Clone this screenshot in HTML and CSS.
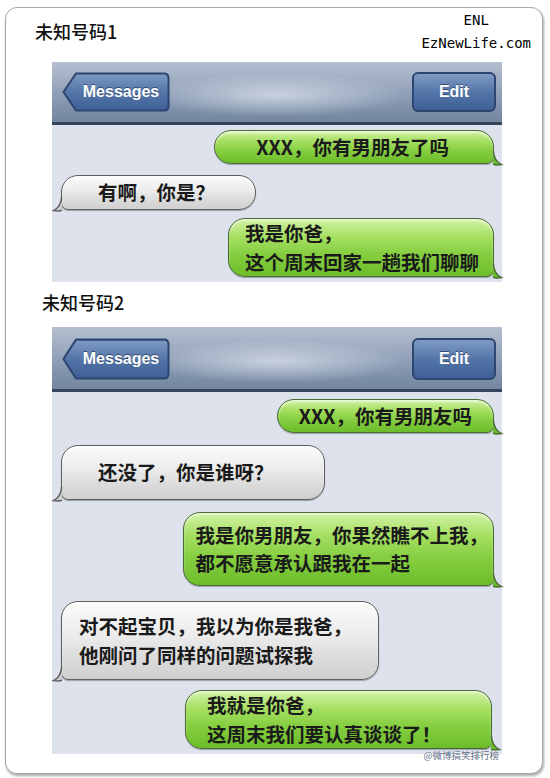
FILE: index.html
```html
<!DOCTYPE html>
<html lang="zh">
<head>
<meta charset="utf-8">
<title>未知号码</title>
<link rel="stylesheet" href="styles.css">
</head>
<body>
<div class="card">
  <header class="head head1">
    <h2 class="title">未知号码1</h2>
    <div class="logo"><div>ENL</div><div>EzNewLife.com</div></div>
  </header>
  <section class="screen">
    <div class="nav">
      <div class="btn back">
        <svg class="back-shape" viewBox="0 0 108 40" preserveAspectRatio="none">
          <defs>
            <linearGradient id="bg1" x1="0" y1="0" x2="0" y2="1">
              <stop offset="0" stop-color="#7f9bc4"/>
              <stop offset="0.5" stop-color="#5475a8"/>
              <stop offset="1" stop-color="#3f6096"/>
            </linearGradient>
          </defs>
          <path d="M14 1.5 H102 Q106.5 1.5 106.5 6 V34 Q106.5 38.5 102 38.5 H14 L1.5 20 Z" fill="url(#bg1)" stroke="#2c4670" stroke-width="2"/>
        </svg>
        <span class="btn-text">Messages</span>
      </div>
      <div class="btn edit"><span class="btn-text">Edit</span></div>
    </div>
    <div class="chat chat1">
      <div class="msg out a1">XXX，你有男朋友了吗<svg class="tail" viewBox="0 0 9 14"><path class="tf" d="M0 0 C0.5 7 3 11 8.5 13.6 C5 14.2 2 14 0 13.3 Z"/><path class="ts" d="M0.3 0 C0.8 7 3.2 11 8.5 13.6 C5 14.2 2 14 0 13.3"/></svg></div>
      <div class="msg in a2">有啊，你是？<svg class="tail" viewBox="0 0 9 14"><path class="tf" d="M0 0 C0.5 7 3 11 8.5 13.6 C5 14.2 2 14 0 13.3 Z"/><path class="ts" d="M0.3 0 C0.8 7 3.2 11 8.5 13.6 C5 14.2 2 14 0 13.3"/></svg></div>
      <div class="msg out a3">我是你爸，<br>这个周末回家一趟我们聊聊<svg class="tail" viewBox="0 0 9 14"><path class="tf" d="M0 0 C0.5 7 3 11 8.5 13.6 C5 14.2 2 14 0 13.3 Z"/><path class="ts" d="M0.3 0 C0.8 7 3.2 11 8.5 13.6 C5 14.2 2 14 0 13.3"/></svg></div>
    </div>
  </section>

  <header class="head head2">
    <h2 class="title">未知号码2</h2>
  </header>
  <section class="screen screen2">
    <div class="nav nav2">
      <div class="btn back">
        <svg class="back-shape" viewBox="0 0 108 40" preserveAspectRatio="none">
          <defs>
            <linearGradient id="bg2" x1="0" y1="0" x2="0" y2="1">
              <stop offset="0" stop-color="#7f9bc4"/>
              <stop offset="0.5" stop-color="#5475a8"/>
              <stop offset="1" stop-color="#3f6096"/>
            </linearGradient>
          </defs>
          <path d="M14 1.5 H102 Q106.5 1.5 106.5 6 V34 Q106.5 38.5 102 38.5 H14 L1.5 20 Z" fill="url(#bg2)" stroke="#2c4670" stroke-width="2"/>
        </svg>
        <span class="btn-text">Messages</span>
      </div>
      <div class="btn edit"><span class="btn-text">Edit</span></div>
    </div>
    <div class="chat chat2">
      <div class="msg out b1">XXX，你有男朋友吗<svg class="tail" viewBox="0 0 9 14"><path class="tf" d="M0 0 C0.5 7 3 11 8.5 13.6 C5 14.2 2 14 0 13.3 Z"/><path class="ts" d="M0.3 0 C0.8 7 3.2 11 8.5 13.6 C5 14.2 2 14 0 13.3"/></svg></div>
      <div class="msg in b2">还没了，你是谁呀？<svg class="tail" viewBox="0 0 9 14"><path class="tf" d="M0 0 C0.5 7 3 11 8.5 13.6 C5 14.2 2 14 0 13.3 Z"/><path class="ts" d="M0.3 0 C0.8 7 3.2 11 8.5 13.6 C5 14.2 2 14 0 13.3"/></svg></div>
      <div class="msg out b3">我是你男朋友，你果然瞧不上我，<br>都不愿意承认跟我在一起<svg class="tail" viewBox="0 0 9 14"><path class="tf" d="M0 0 C0.5 7 3 11 8.5 13.6 C5 14.2 2 14 0 13.3 Z"/><path class="ts" d="M0.3 0 C0.8 7 3.2 11 8.5 13.6 C5 14.2 2 14 0 13.3"/></svg></div>
      <div class="msg in b4">对不起宝贝，我以为你是我爸，<br>他刚问了同样的问题试探我<svg class="tail" viewBox="0 0 9 14"><path class="tf" d="M0 0 C0.5 7 3 11 8.5 13.6 C5 14.2 2 14 0 13.3 Z"/><path class="ts" d="M0.3 0 C0.8 7 3.2 11 8.5 13.6 C5 14.2 2 14 0 13.3"/></svg></div>
      <div class="msg out b5">我就是你爸，<br>这周末我们要认真谈谈了！<svg class="tail" viewBox="0 0 9 14"><path class="tf" d="M0 0 C0.5 7 3 11 8.5 13.6 C5 14.2 2 14 0 13.3 Z"/><path class="ts" d="M0.3 0 C0.8 7 3.2 11 8.5 13.6 C5 14.2 2 14 0 13.3"/></svg></div>
      <span class="watermark">@微博搞笑排行榜</span>
    </div>
  </section>
</div>
</body>
</html>
```

FILE: styles.css
```css
html, body {
  margin: 0;
  padding: 0;
  background: #ffffff;
}

body {
  width: 550px;
  height: 778px;
  overflow: hidden;
  font-family: "Noto Sans CJK SC", "Noto Sans", sans-serif;
}

.card {
  box-sizing: border-box;
  margin: 7px 0 0 5px;
  width: 538px;
  height: 767px;
  border: 1px solid #a9a9a9;
  border-radius: 12px;
  box-shadow: 1px 2px 3px rgba(0, 0, 0, 0.35);
  background: #ffffff;
}

.head {
  display: flex;
  justify-content: space-between;
  align-items: flex-start;
  padding: 0 11px 0 29px;
}

.head1 {
  height: 54px;
}

.head2 {
  height: 45px;
  padding-left: 36px;
}

.title {
  margin: 11px 0 0 0;
  font-size: 18px;
  font-weight: 500;
  line-height: 24px;
  color: #111;
}

.head2 .title {
  margin-top: 8px;
}

.logo {
  margin-top: 1px;
  text-align: center;
  font-family: "DejaVu Sans Mono", monospace;
  font-size: 14px;
  line-height: 23px;
  color: #000;
}

.screen {
  margin-left: 46px;
  width: 450px;
  background: #dde2ed;
}

.nav {
  box-sizing: border-box;
  height: 63px;
  display: flex;
  justify-content: space-between;
  align-items: flex-start;
  padding: 10px 6px 0 10px;
  border-bottom: 3px solid #34445c;
  background:
    radial-gradient(ellipse 130px 22px at 50% 55%, rgba(225, 230, 238, 0.7), rgba(225, 230, 238, 0) 100%),
    linear-gradient(#b4bfd0 0%, #a0adc2 30%, #8a9bb4 60%, #72869e 100%);
}

.nav2 {
  height: 65px;
  padding-top: 11px;
}

.btn {
  position: relative;
  box-sizing: border-box;
  height: 40px;
  display: flex;
  align-items: center;
  justify-content: center;
}

.nav2 .btn {
  height: 42px;
}

.back {
  width: 108px;
  padding-left: 10px;
}

.back-shape {
  position: absolute;
  left: 0;
  top: 0;
  width: 108px;
  height: 100%;
}

.edit {
  width: 84px;
  border: 2px solid #2c4670;
  border-radius: 6px;
  background: linear-gradient(#7f9bc4 0%, #5475a8 50%, #3f6096 100%);
}

.btn-text {
  position: relative;
  font-family: "Liberation Sans", Arial, sans-serif;
  font-weight: 700;
  font-size: 16px;
  color: #ffffff;
  text-shadow: 0 -1px 0 rgba(20, 40, 70, 0.6);
}

.chat {
  position: relative;
  display: flex;
  flex-direction: column;
  padding: 0 8px 5px 9px;
}

.msg {
  position: relative;
  box-sizing: border-box;
  font-size: 19.5px;
  font-weight: 700;
  line-height: 28.5px;
  color: #1a1a1a;
  padding: 1.75px 16px;
  border: 1.5px solid #555;
  border-radius: 17px;
  white-space: nowrap;
  box-shadow: 0 1px 1px rgba(0, 0, 0, 0.3), inset 0 2px 2px rgba(255, 255, 255, 0.55);
}

.out {
  align-self: flex-end;
  border-color: #4b6b35;
  border-bottom-right-radius: 7px;
  background: linear-gradient(#d2f2a6 0%, #a7e064 30%, #87cf42 60%, #6cbd2a 100%);
}

.in {
  align-self: flex-start;
  border-color: #5e5e5e;
  border-bottom-left-radius: 7px;
  background: linear-gradient(#fbfbfb 0%, #ebebeb 45%, #dadada 75%, #d0d0d0 100%);
}

.tail {
  position: absolute;
  width: 9px;
  height: 14px;
  bottom: -1.5px;
  overflow: visible;
}

.tail .ts {
  fill: none;
  stroke-width: 1.5;
}

.out .tail {
  right: -9px;
}

.out .tail .tf {
  fill: #6cbd2a;
}

.out .tail .ts {
  stroke: #4b6b35;
}

.in .tail {
  left: -9px;
  transform: scaleX(-1);
}

.in .tail .tf {
  fill: #d0d0d0;
}

.in .tail .ts {
  stroke: #5e5e5e;
}

/* screen 1 */
.a1 {
  margin-top: 5px;
  padding-left: 41px;
  padding-right: 44px;
}

.a2 {
  margin-top: 11px;
  padding: 2.25px 40px 2.25px 36px;
}

.a3 {
  margin-top: 8px;
  padding: 0 14px 0 16px;
}

/* screen 2 */
.b1 {
  margin-top: 7px;
  padding-left: 21px;
  padding-right: 21px;
}

.b2 {
  margin-top: 12px;
  padding: 12.25px 50px 12.25px 36px;
}

.b3 {
  margin-top: 12px;
  padding: 7.5px 5px 7.5px 11px;
}

.b4 {
  margin-top: 15px;
  padding: 10px 26px 10px 17px;
}

.b5 {
  margin-top: 10px;
  margin-right: 2px;
  padding: 0 50px 0 21px;
}

.watermark {
  position: absolute;
  right: 3px;
  bottom: -7px;
  font-size: 9.5px;
  line-height: 12px;
  color: #5d6b80;
  text-shadow: 0 0 2px #ffffff, 0 0 1px #ffffff;
}
```
